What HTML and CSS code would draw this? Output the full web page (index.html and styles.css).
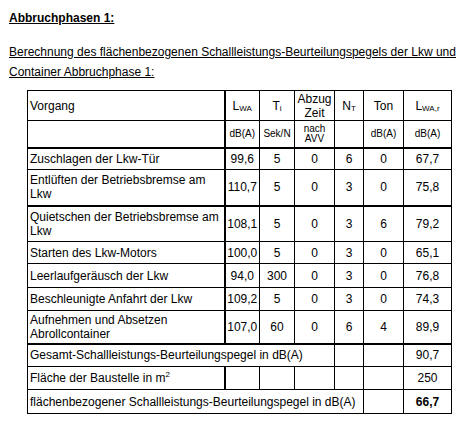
FILE: index.html
```html
<!DOCTYPE html>
<html lang="de">
<head>
    <meta charset="UTF-8">
    <meta name="viewport" content="width=device-width, initial-scale=1.0">
    <title>Abbruchphasen 1</title>
    <link rel="stylesheet" href="styles.css">
</head>
<body>
    <div class="page">
        <h1 class="title">Abbruchphasen 1:</h1>
        <p class="subtitle">Berechnung des flächenbezogenen Schallleistungs-Beurteilungspegels der Lkw und<br>Container Abbruchphase 1:</p>

        <!-- Berechnungstabelle -->
        <table class="calc">
            <colgroup>
                <col class="c-name">
                <col class="c-lwa">
                <col class="c-ti">
                <col class="c-abzug">
                <col class="c-nt">
                <col class="c-ton">
                <col class="c-lwar">
            </colgroup>
            <tr class="row-head">
                <td class="name">Vorgang</td>
                <td>L<sub>WA</sub></td>
                <td>T<sub>i</sub></td>
                <td>Abzug Zeit</td>
                <td>N<sub>T</sub></td>
                <td>Ton</td>
                <td>L<sub>WA,r</sub></td>
            </tr>
            <tr class="row-unit thick">
                <td class="name"></td>
                <td>dB(A)</td>
                <td>Sek/N</td>
                <td class="unit-two">nach AVV</td>
                <td></td>
                <td>dB(A)</td>
                <td>dB(A)</td>
            </tr>
            <tr class="row-s">
                <td class="name">Zuschlagen der Lkw-Tür</td>
                <td>99,6</td><td>5</td><td>0</td><td>6</td><td>0</td><td>67,7</td>
            </tr>
            <tr class="row-2 thick">
                <td class="name">Entlüften der Betriebsbremse am Lkw</td>
                <td>110,7</td><td>5</td><td>0</td><td>3</td><td>0</td><td>75,8</td>
            </tr>
            <tr class="row-2">
                <td class="name">Quietschen der Betriebsbremse am Lkw</td>
                <td>108,1</td><td>5</td><td>0</td><td>3</td><td>6</td><td>79,2</td>
            </tr>
            <tr class="row-s">
                <td class="name">Starten des Lkw-Motors</td>
                <td>100,0</td><td>5</td><td>0</td><td>3</td><td>0</td><td>65,1</td>
            </tr>
            <tr class="row-l">
                <td class="name">Leerlaufgeräusch der Lkw</td>
                <td>94,0</td><td>300</td><td>0</td><td>3</td><td>0</td><td>76,8</td>
            </tr>
            <tr>
                <td class="name">Beschleunigte Anfahrt der Lkw</td>
                <td>109,2</td><td>5</td><td>0</td><td>3</td><td>0</td><td>74,3</td>
            </tr>
            <tr class="row-2s thick">
                <td class="name">Aufnehmen und Absetzen Abrollcontainer</td>
                <td>107,0</td><td>60</td><td>0</td><td>6</td><td>4</td><td>89,9</td>
            </tr>
            <tr>
                <td class="label" colspan="4">Gesamt-Schallleistungs-Beurteilungspegel in dB(A)</td>
                <td></td><td></td><td>90,7</td>
            </tr>
            <tr>
                <td class="name">Fläche der Baustelle in m<sup>2</sup></td>
                <td></td><td></td><td></td><td></td><td></td><td>250</td>
            </tr>
            <tr class="row-l">
                <td class="label" colspan="5">flächenbezogener Schallleistungs-Beurteilungspegel in dB(A)</td>
                <td></td><td class="result">66,7</td>
            </tr>
        </table>
    </div>
</body>
</html>
```

FILE: styles.css
```css
* {
    margin: 0;
    padding: 0;
    box-sizing: border-box;
}
body {
    font-family: "Liberation Sans", Arial, sans-serif;
    font-size: 12px;
    color: #000;
    background: #fff;
}
.page {
    padding: 11px 0 0 9px;
}
.title {
    font-size: 12px;
    font-weight: bold;
    line-height: 14px;
    text-decoration: underline;
    margin-bottom: 17px;
}
.subtitle {
    line-height: 20px;
    text-decoration: underline;
    white-space: nowrap;
    margin-bottom: 8px;
}
/* Table */
.calc {
    margin-left: 18px;
    width: 424px;
    table-layout: fixed;
    border-collapse: collapse;
}
.c-name { width: 197px; }
.c-lwa { width: 35px; }
.c-ti { width: 35px; }
.c-abzug { width: 40px; }
.c-nt { width: 29px; }
.c-ton { width: 40px; }
.c-lwar { width: 48px; }
.calc td {
    border: 1px solid #000;
    padding: 0 1px;
    line-height: 14px;
    text-align: center;
    vertical-align: middle;
}
.calc td.name,
.calc td.label {
    text-align: left;
    padding: 0 2px;
}
.calc td.name {
    border-right-width: 2px;
}
.calc tr.thick td {
    border-bottom-width: 2px;
}
.calc sub {
    font-size: 8px;
    vertical-align: -1px;
    line-height: 0;
}
.calc sup {
    font-size: 8px;
    vertical-align: 5px;
    line-height: 0;
}
.row-unit td {
    font-size: 10px;
}
.row-unit td.unit-two {
    line-height: 10px;
}
.calc tr { height: 23px; }
.calc tr.row-head { height: 30px; }
.calc tr.row-unit { height: 27px; }
.calc tr.row-s { height: 22px; }
.calc tr.row-l { height: 24px; }
.calc tr.row-2 { height: 36px; }
.calc tr.row-2s { height: 33px; }
.result {
    font-weight: bold;
}
```
